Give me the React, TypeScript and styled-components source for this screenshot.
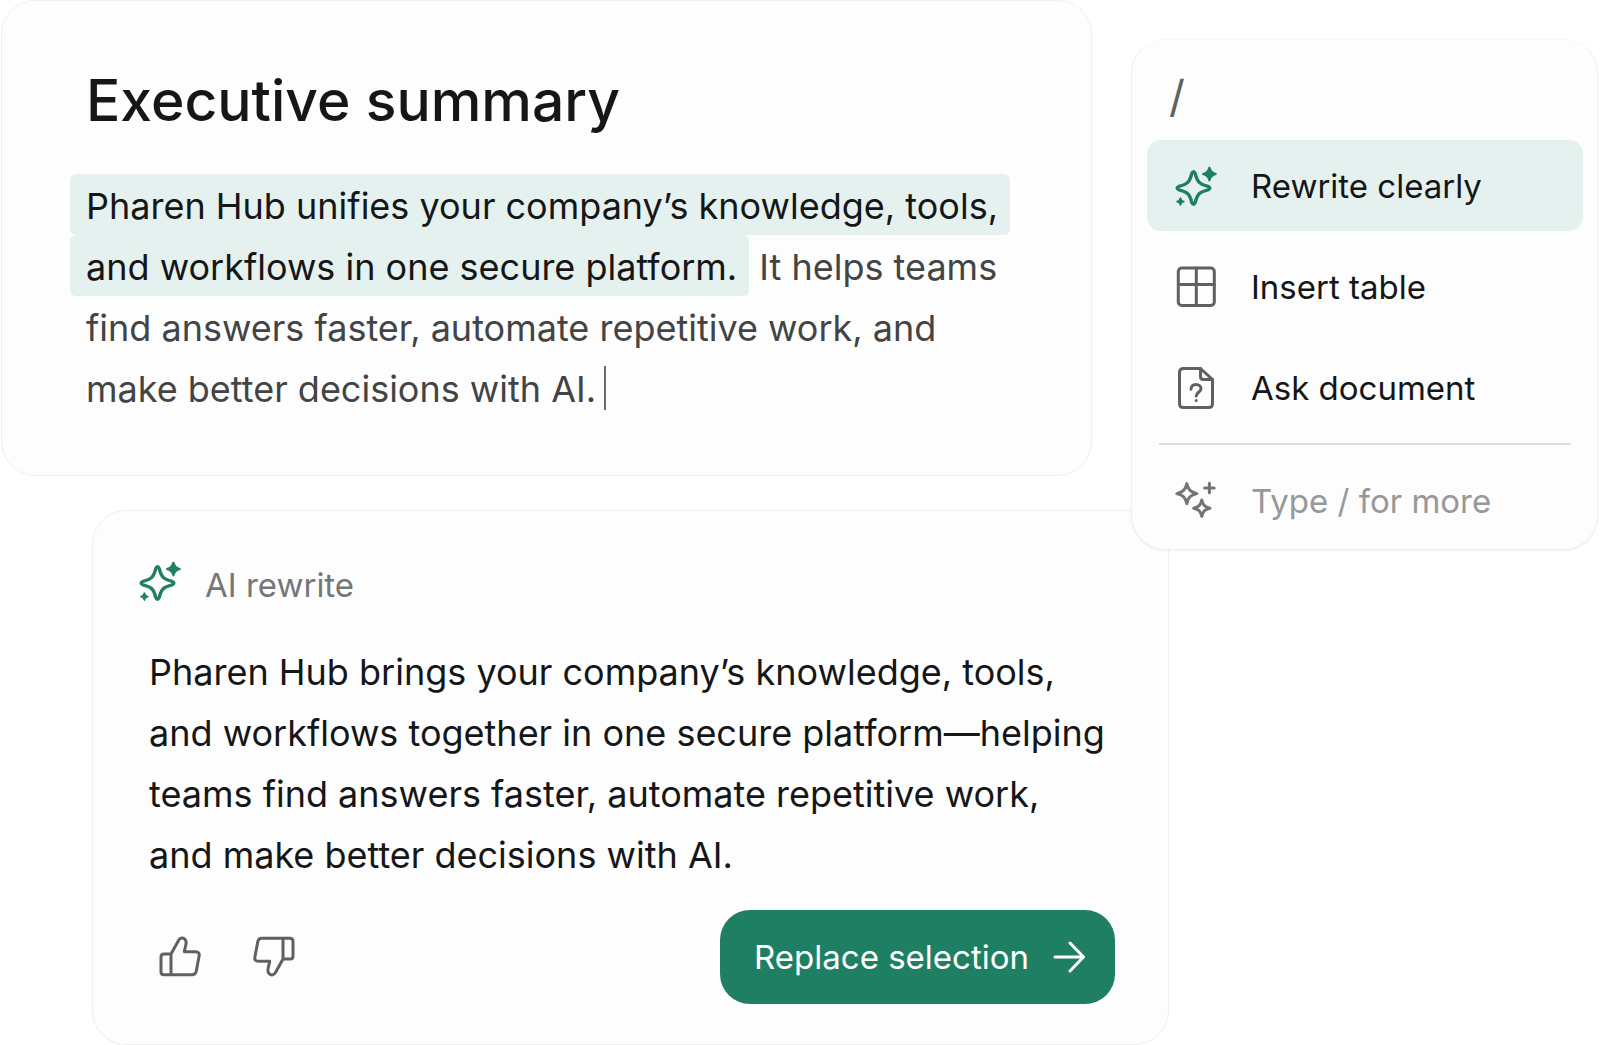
import React, { useState } from "react";
import styled, { createGlobalStyle, css } from "styled-components";

const color = {
  ink: "#151617",
  body: "#434445",
  muted: "#757677",
  faint: "#979899",
  icon: "#5f6061",
  iconFaint: "#737475",
  green: "#1f7f63",
  tint: "#e5f1ee",
  card: "#fdfdfd",
  edge: "#efeff2",
  rule: "#dcdddd",
};

const GlobalStyle = createGlobalStyle`
  *, *::before, *::after { box-sizing: border-box; }
  body {
    margin: 0;
    background: #ffffff;
    color: ${color.ink};
    font-family: Inter, "Liberation Sans", sans-serif;
  }
  button, input { font: inherit; color: inherit; }
`;

const Board = styled.main`
  display: grid;
  grid-template-columns: 91px minmax(0, 1fr) 39px 38px 429px;
  grid-template-rows: auto auto;
  row-gap: 34px;
  padding: 0 2px 0 1px;
`;

const card = css`
  background: ${color.card};
  border: 1px solid ${color.edge};
  border-radius: 34px;
`;

const DocumentCard = styled.article`
  ${card}
  grid-column: 1 / 3;
  grid-row: 1;
  padding: 64px 64px 55px 84px;
`;

const RewriteCard = styled.section`
  ${card}
  grid-column: 2 / 5;
  grid-row: 2;
  padding: 44px 53px 40px 56px;
`;

const MenuCard = styled.aside`
  ${card}
  grid-column: 4 / 6;
  grid-row: 1 / 3;
  align-self: start;
  z-index: 1;
  margin-top: 39px;
  padding: 21px 14px 3px 15px;
  border-top-color: #f8f8f9;
  box-shadow: 0 1px 2px rgba(20, 20, 30, 0.06);
`;

const Title = styled.h1`
  margin: 0 0 39px;
  font-size: 57px;
  line-height: 72px;
  font-weight: 500;
`;

const Paragraph = styled.p<{ $tone: string }>`
  margin: 0;
  font-size: 36px;
  line-height: 61px;
  color: ${(p) => p.$tone};
`;

const Line = styled.span`
  display: block;
  white-space: nowrap;
`;

const Highlight = styled.mark`
  margin-left: -16px;
  padding: 10px 12px 7px 16px;
  border-radius: 6px;
  background: ${color.tint};
  color: ${color.ink};
`;

const Caret = styled.span`
  display: inline-block;
  width: 2px;
  height: 44px;
  margin-left: 8px;
  vertical-align: -8px;
  background: #6b6c6d;
`;

const CommandInput = styled.input`
  display: block;
  width: 100%;
  height: 70px;
  margin-bottom: 9px;
  padding: 0 22px;
  border: 0;
  outline: 0;
  background: transparent;
  color: ${color.icon};
  font-size: 44px;
`;

const CommandList = styled.div`
  display: flex;
  flex-direction: column;
  gap: 10px;
`;

const Command = styled.button<{ $active?: boolean; $quiet?: boolean }>`
  display: flex;
  align-items: center;
  gap: 34px;
  height: 91px;
  padding: 0 28px;
  border: 0;
  border-radius: 14px;
  background: ${(p) => (p.$active ? color.tint : "transparent")};
  color: ${(p) => (p.$quiet ? color.faint : color.ink)};
  font-size: 33px;
  line-height: 44px;
  white-space: nowrap;
  cursor: pointer;
`;

const Divider = styled.hr`
  width: calc(100% - 24px);
  height: 2px;
  margin: 0 12px;
  border: 0;
  background: ${color.rule};
`;

const Icon = styled.svg<{ $tone?: string }>`
  flex: none;
  width: 42px;
  height: 42px;
  color: ${(p) => p.$tone ?? color.icon};
  fill: none;
  stroke: currentColor;
  stroke-width: 3;
  stroke-linecap: round;
  stroke-linejoin: round;
`;

const RewriteHeader = styled.header`
  display: flex;
  align-items: center;
  gap: 24px;
  margin: 0 0 35px -10px;
`;

const RewriteLabel = styled.h2`
  margin: 0;
  padding-top: 8px;
  color: ${color.muted};
  font-size: 33px;
  line-height: 44px;
  font-weight: 400;
`;

const RewriteFooter = styled.footer`
  display: flex;
  align-items: center;
  justify-content: space-between;
  margin-top: 24px;
`;

const Feedback = styled.div`
  display: flex;
  gap: 52px;
  padding-left: 10px;
`;

const IconButton = styled.button`
  display: flex;
  padding: 0;
  border: 0;
  background: transparent;
  cursor: pointer;
`;

const PrimaryButton = styled.button`
  display: flex;
  align-items: center;
  gap: 24px;
  height: 94px;
  padding: 0 30px 0 34px;
  border: 0;
  border-radius: 30px;
  background: ${color.green};
  color: #ffffff;
  font-size: 33px;
  line-height: 44px;
  white-space: nowrap;
  cursor: pointer;
`;

const ArrowSvg = styled.svg`
  flex: none;
  width: 32px;
  height: 32px;
  fill: none;
  stroke: currentColor;
  stroke-width: 3;
  stroke-linecap: round;
  stroke-linejoin: round;
`;

const SparkleIcon = () => (
  <Icon viewBox="0 0 42 42" $tone={color.green} aria-hidden="true">
    <path
      d="M16.8 8.4Q18.5 5 20.2 8.4C22.2 17 24.6 19.4 33.2 21.4Q36.6 23.1 33.2 24.8C24.6 26.8 22.2 29.2 20.2 37.6Q18.5 41 16.8 37.6C14.8 29.2 12.4 26.8 3.8 24.8Q0.4 23.1 3.8 21.4C12.4 19.4 14.8 17 16.8 8.4Z"
      strokeWidth="3.4"
    />
    <path
      d="M34.4 2.6C35.4 6.6 36.8 8 40.8 9C36.8 10 35.4 11.4 34.4 15.4C33.4 11.4 32 10 28 9C32 8 33.400 6.600 34.400 2.600Z"
      fill="currentColor"
      strokeWidth="2"
    />
    <path
      d="M5.4 33C6 35.4 6.6 36 9 36.6C6.6 37.2 6 37.8 5.4 40.2C4.8 37.8 4.2 37.2 1.8 36.6C4.2 36 4.8 35.4 5.4 33Z"
      fill="currentColor"
      strokeWidth="1.4"
    />
  </Icon>
);

const TableIcon = () => (
  <Icon viewBox="0 0 42 42" aria-hidden="true">
    <rect x="3.3" y="2" width="36" height="37.5" rx="3.5" />
    <path d="M21.3 2V39.5M3.3 18.5H39.3" />
  </Icon>
);

const DocumentQuestionIcon = () => (
  <Icon viewBox="0 0 42 42" aria-hidden="true">
    <path d="M25.5 1.5H8.5Q4.5 1.5 4.5 5.5V36.5Q4.5 40.5 8.5 40.5H33.5Q37.5 40.5 37.5 36.5V12.5Z" />
    <path d="M25.5 1.5V9.5Q25.5 12.5 28.5 12.5H37.5" />
    <path d="M16 22.2C16.3 18.8 18.4 17.5 21 17.5C23.8 17.5 26 19.2 26 21.8C26 25 21.2 25.6 21.2 29M21.2 33.4V33.5" />
  </Icon>
);

const SparklesIcon = () => (
  <Icon viewBox="0 0 42 42" $tone={color.iconFaint} aria-hidden="true">
    <path d="M11.8 3.6C13.2 9.8 15.6 12.2 21.8 13.6C15.6 15 13.2 17.4 11.8 23.6C10.4 17.4 8 15 1.8 13.6C8 12.2 10.4 9.8 11.8 3.6Z" />
    <path d="M26.8 20C28 25.2 29.8 27 35 28.2C29.8 29.4 28 31.2 26.8 36.4C25.6 31.2 23.8 29.4 18.6 28.2C23.8 27 25.6 25.2 26.8 20Z" />
    <path d="M34.4 3.2V12.8M29.6 8H39.2" />
  </Icon>
);

const ThumbIcon = ({ down = false }: { down?: boolean }) => (
  <Icon viewBox="0 0 42 42" aria-hidden="true">
    <g transform={down ? "rotate(180 21 20.5)" : undefined}>
      <path d="M12 18L19.5 4.5C20.8 1.6 24.5 1.2 26.3 3.8C27.2 5.2 27.3 6.8 26.9 8.5L25.3 15.7H36.5C39.5 15.7 40.6 17.5 40.1 20L37.2 35.5C36.7 37.6 35.4 38.8 33 38.8H5C3 38.8 2 37.7 2 35.8V21C2 19 3 18 5 18H12V38.8" />
    </g>
  </Icon>
);

const ArrowIcon = () => (
  <ArrowSvg viewBox="0 0 32 32" aria-hidden="true">
    <path d="M2 16H30M17 2L30.5 16L17 30" />
  </ArrowSvg>
);

const commands = [
  { label: "Rewrite clearly", icon: <SparkleIcon /> },
  { label: "Insert table", icon: <TableIcon /> },
  { label: "Ask document", icon: <DocumentQuestionIcon /> },
];

export default function App() {
  const [query, setQuery] = useState("/");
  const [active, setActive] = useState(0);

  return (
    <>
      <GlobalStyle />
      <Board>
        <DocumentCard>
          <Title>Executive summary</Title>
          <Paragraph $tone={color.body}>
            <Line>
              <Highlight>Pharen Hub unifies your company’s knowledge, tools,</Highlight>
            </Line>
            <Line>
              <Highlight>and workflows in one secure platform.</Highlight> It helps teams
            </Line>
            <Line>find answers faster, automate repetitive work, and</Line>
            <Line>
              make better decisions with AI.
              <Caret />
            </Line>
          </Paragraph>
        </DocumentCard>

        <RewriteCard>
          <RewriteHeader>
            <SparkleIcon />
            <RewriteLabel>AI rewrite</RewriteLabel>
          </RewriteHeader>
          <Paragraph $tone={color.ink}>
            <Line>Pharen Hub brings your company’s knowledge, tools,</Line>
            <Line>and workflows together in one secure platform—helping</Line>
            <Line>teams find answers faster, automate repetitive work,</Line>
            <Line>and make better decisions with AI.</Line>
          </Paragraph>
          <RewriteFooter>
            <Feedback>
              <IconButton type="button" aria-label="Good rewrite">
                <ThumbIcon />
              </IconButton>
              <IconButton type="button" aria-label="Poor rewrite">
                <ThumbIcon down />
              </IconButton>
            </Feedback>
            <PrimaryButton type="button">
              Replace selection
              <ArrowIcon />
            </PrimaryButton>
          </RewriteFooter>
        </RewriteCard>

        <MenuCard>
          <CommandInput
            aria-label="Command"
            value={query}
            onChange={(event) => setQuery(event.target.value)}
          />
          <CommandList>
            {commands.map((command, index) => (
              <Command
                key={command.label}
                type="button"
                $active={index === active}
                onClick={() => setActive(index)}
              >
                {command.icon}
                {command.label}
              </Command>
            ))}
            <Divider />
            <Command type="button" $quiet>
              <SparklesIcon />
              Type / for more
            </Command>
          </CommandList>
        </MenuCard>
      </Board>
    </>
  );
}
